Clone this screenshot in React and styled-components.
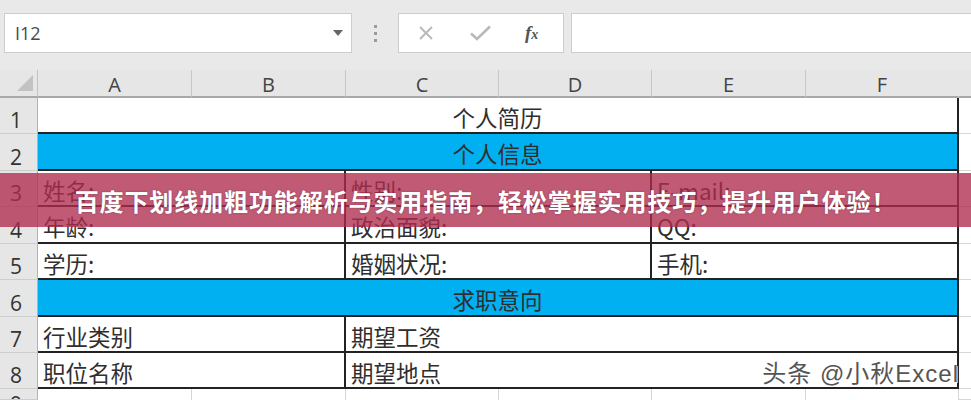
import React from 'react';
import styled, { createGlobalStyle } from 'styled-components';

const GlobalStyle = createGlobalStyle`
  html, body {
    margin: 0;
    padding: 0;
    background: #e9e9e9;
    overflow: hidden;
  }
  * { box-sizing: border-box; }
`;

const CJK = `"Noto Sans CJK SC", "Noto Sans", sans-serif`;

const Page = styled.div`
  position: relative;
  width: 971px;
  height: 400px;
  overflow: hidden;
  background: #e9e9e9;
`;

const Toolbar = styled.div`
  display: flex;
  align-items: center;
  height: 70px;
  padding: 13px 0 17px 4px;
`;

const NameBox = styled.div`
  display: flex;
  align-items: center;
  justify-content: space-between;
  width: 348px;
  height: 40px;
  padding: 0 8px 0 10px;
  background: #fff;
  border: 1px solid #cdcdcd;
`;

const NameText = styled.span`
  font-family: "Open Sans", "Liberation Sans", sans-serif;
  font-size: 18px;
  color: #4a4a4a;
`;

const DropArrow = styled.span`
  width: 0;
  height: 0;
  border-left: 5px solid transparent;
  border-right: 5px solid transparent;
  border-top: 6px solid #666;
`;

const Grip = styled.div`
  display: flex;
  flex-direction: column;
  gap: 4px;
  margin: 0 21px 0 22px;
`;

const Dot = styled.span`
  width: 3px;
  height: 3px;
  background: #9a9a9a;
`;

const FxButtons = styled.div`
  display: flex;
  align-items: center;
  width: 166px;
  height: 40px;
  padding-left: 19px;
  gap: 36px;
  background: #fff;
  border: 1px solid #cdcdcd;
`;

const FxLabel = styled.span`
  font-family: "Liberation Serif", serif;
  font-style: italic;
  font-weight: 700;
  font-size: 19px;
  color: #555;
  margin-left: -2px;
  sub {
    font-size: 14px;
    vertical-align: baseline;
  }
`;

const FormulaInput = styled.div`
  flex: 1;
  height: 40px;
  margin-left: 7px;
  background: #fff;
  border: 1px solid #cdcdcd;
  border-right: none;
`;

const Sheet = styled.div`
  display: grid;
  grid-template-columns: 38px 154px 154px 153px 153px 154px 153px 1fr;
  grid-template-rows: 28px 36px 37px 36px 37px 36px 37px 36px 36px 11px;
`;

const Corner = styled.div`
  position: relative;
  background: #e6e6e6;
  border-right: 1px solid #c2c2c2;
  border-bottom: 2px solid #a8a8a8;
  &::after {
    content: '';
    position: absolute;
    right: 4px;
    bottom: 5px;
    width: 0;
    height: 0;
    border-left: 16px solid transparent;
    border-bottom: 16px solid #c2c2c2;
  }
`;

const ColHead = styled.div`
  display: flex;
  align-items: center;
  justify-content: center;
  padding-top: 3px;
  background: #e6e6e6;
  border-right: 1px solid ${(p) => (p.$last ? '#e6e6e6' : '#c6c6c6')};
  border-bottom: 2px solid #a8a8a8;
  font-family: "Open Sans", "Liberation Sans", sans-serif;
  font-size: 20px;
  color: #444;
`;

const RowHead = styled.div`
  display: flex;
  align-items: ${(p) => (p.$top ? 'flex-start' : 'flex-end')};
  justify-content: center;
  padding: ${(p) => (p.$top ? '5px 5px 0 0' : '0 5px 2px 0')};
  background: #e6e6e6;
  border-right: 1px solid #b4b4b4;
  border-bottom: 1px solid #cdcdcd;
  font-family: "Open Sans", "Liberation Sans", sans-serif;
  font-size: 21px;
  line-height: 1;
  color: #333;
  overflow: hidden;
`;

const Cell = styled.div`
  grid-column: span ${(p) => p.$span || 1};
  display: flex;
  align-items: center;
  justify-content: ${(p) => (p.$center ? 'center' : 'flex-start')};
  padding: 3px 0 0 ${(p) => (p.$center ? '0' : '5px')};
  background: ${(p) => (p.$blue ? '#00b0f0' : '#fff')};
  border-right: 2px solid #222;
  border-bottom: 2px solid #222;
  font-family: ${CJK};
  font-size: 22.5px;
  color: #2e2e2e;
  white-space: nowrap;
`;

const BlankCell = styled.div`
  background: #fff;
  border-right: 1px solid #d6d6d6;
`;

const Filler = styled.div`
  background: ${(p) => (p.$head ? '#e6e6e6' : '#fff')};
  border-bottom: ${(p) => (p.$head ? '2px solid #a8a8a8' : '1px solid #d6d6d6')};
`;

const Banner = styled.div`
  position: absolute;
  left: 0;
  right: 0;
  top: 173px;
  height: 54px;
  display: flex;
  align-items: center;
  justify-content: center;
  background: rgba(176, 44, 78, 0.78);
  font-family: ${CJK};
  font-weight: 700;
  font-size: 24px;
  letter-spacing: 0.9px;
  color: #fff;
  text-shadow: 0 0 2px rgba(0, 0, 0, 0.35);
`;

const Watermark = styled.div`
  position: absolute;
  right: 12px;
  top: 361px;
  font-family: "Liberation Sans", ${CJK};
  font-size: 24px;
  line-height: 1.1;
  letter-spacing: 1px;
  color: #555;
  text-shadow: 1px 1px 0 #fff, -1px 0 0 #fff;
  white-space: nowrap;
`;

const columns = ['A', 'B', 'C', 'D', 'E', 'F'];

const rows = [
  [{ span: 6, text: '个人简历', center: true }],
  [{ span: 6, text: '个人信息', center: true, blue: true }],
  [{ span: 2, text: '姓名:' }, { span: 2, text: '性别:' }, { span: 2, text: 'E-mail:' }],
  [{ span: 2, text: '年龄:' }, { span: 2, text: '政治面貌:' }, { span: 2, text: 'QQ:' }],
  [{ span: 2, text: '学历:' }, { span: 2, text: '婚姻状况:' }, { span: 2, text: '手机:' }],
  [{ span: 6, text: '求职意向', center: true, blue: true }],
  [{ span: 2, text: '行业类别' }, { span: 4, text: '期望工资' }],
  [{ span: 2, text: '职位名称' }, { span: 4, text: '期望地点' }],
];

const CrossIcon = () => (
  <svg width="16" height="16" viewBox="0 0 16 16">
    <path d="M2 2 L14 14 M14 2 L2 14" stroke="#b9b9b9" strokeWidth="2" fill="none" />
  </svg>
);

const CheckIcon = () => (
  <svg width="21" height="16" viewBox="0 0 21 16">
    <path d="M1 8.5 L7 14 L20 1.5" stroke="#b9b9b9" strokeWidth="2.6" fill="none" />
  </svg>
);

export default function App() {
  return (
    <Page>
      <GlobalStyle />
      <Toolbar>
        <NameBox>
          <NameText>I12</NameText>
          <DropArrow />
        </NameBox>
        <Grip>
          <Dot />
          <Dot />
          <Dot />
        </Grip>
        <FxButtons>
          <CrossIcon />
          <CheckIcon />
          <FxLabel>f<sub>x</sub></FxLabel>
        </FxButtons>
        <FormulaInput />
      </Toolbar>

      <Sheet>
        <Corner />
        {columns.map((c, i) => (
          <ColHead key={c} $last={i === columns.length - 1}>{c}</ColHead>
        ))}
        <Filler $head />

        {rows.map((cells, r) => (
          <React.Fragment key={r}>
            <RowHead>{r + 1}</RowHead>
            {cells.map((cell, i) => (
              <Cell key={i} $span={cell.span} $center={cell.center} $blue={cell.blue}>
                {cell.text}
              </Cell>
            ))}
            <Filler />
          </React.Fragment>
        ))}

        <RowHead $top>9</RowHead>
        {columns.map((c) => (
          <BlankCell key={c} />
        ))}
        <Filler />
      </Sheet>

      <Banner>百度下划线加粗功能解析与实用指南，轻松掌握实用技巧，提升用户体验！</Banner>
      <Watermark>头条 @小秋Excel</Watermark>
    </Page>
  );
}
